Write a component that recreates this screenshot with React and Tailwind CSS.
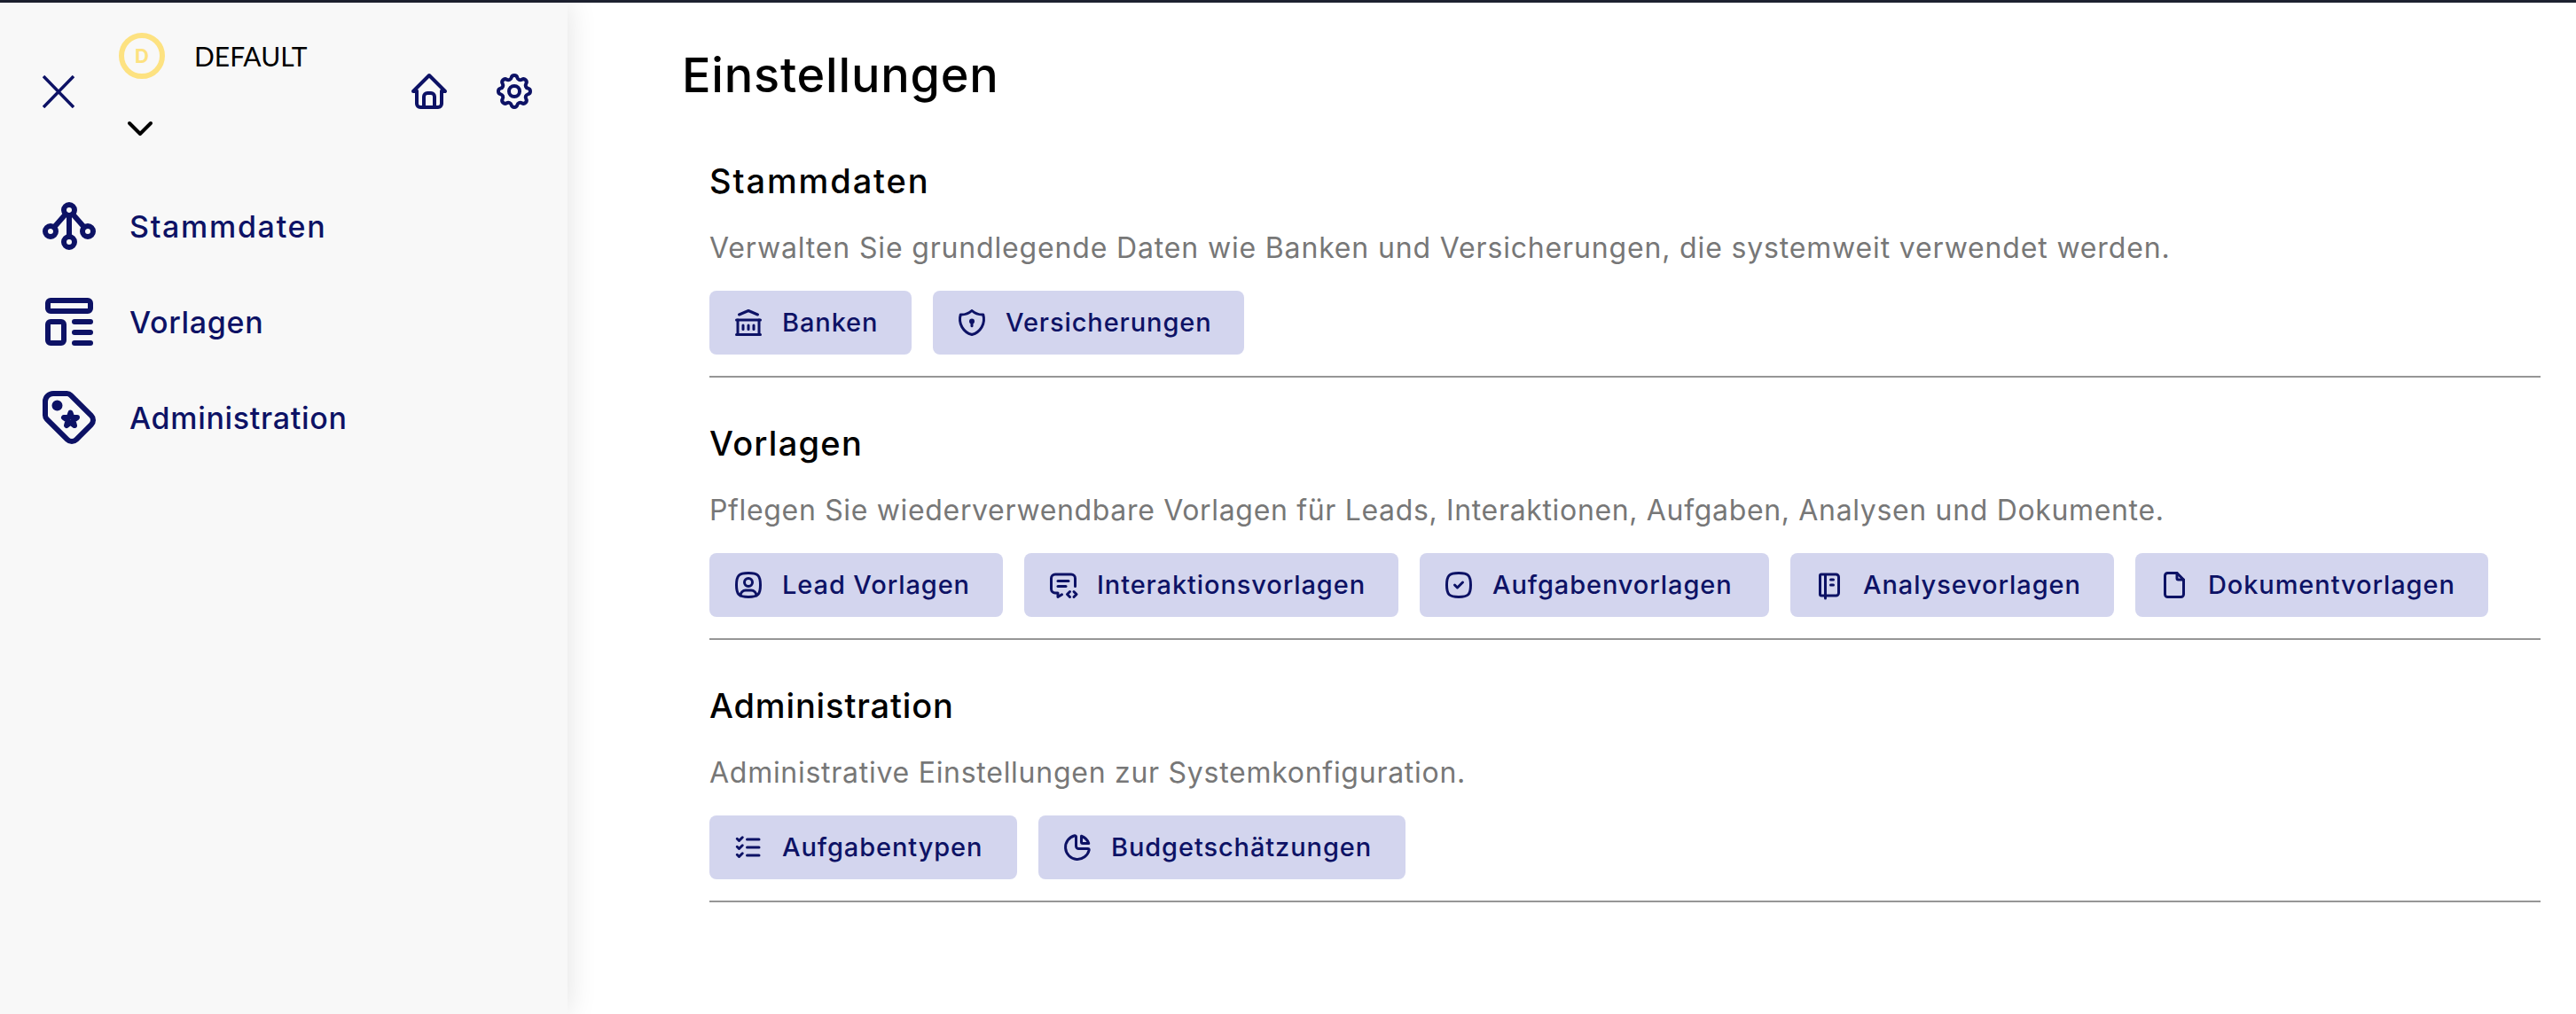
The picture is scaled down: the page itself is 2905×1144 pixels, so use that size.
import {
  TbBinaryTree2, TbTemplate, TbTagStarred, TbHome, TbSettings, TbChevronDown,
  TbBuildingBank, TbShieldLock, TbUserSquareRounded, TbMessageCode,
  TbSquareRoundedCheck, TbNotebook, TbFile, TbListCheck, TbChartPie,
} from 'react-icons/tb';

const NAV = [
  { label: 'Stammdaten', icon: TbBinaryTree2, track: 'tracking-[1.7px]' },
  { label: 'Vorlagen', icon: TbTemplate, track: 'tracking-[0.7px]' },
  { label: 'Administration', icon: TbTagStarred, track: 'tracking-[0.7px]' },
];

const SECTIONS = [
  {
    title: 'Stammdaten',
    track: 'tracking-[1.9px]',
    descTrack: 'tracking-[0.84px]',
    desc: 'Verwalten Sie grundlegende Daten wie Banken und Versicherungen, die systemweit verwendet werden.',
    items: [
      { label: 'Banken', icon: TbBuildingBank, w: 'w-[228px]' },
      { label: 'Versicherungen', icon: TbShieldLock, w: 'w-[351px]' },
    ],
  },
  {
    title: 'Vorlagen',
    track: 'tracking-[1.25px]',
    descTrack: 'tracking-[0.66px]',
    desc: 'Pflegen Sie wiederverwendbare Vorlagen für Leads, Interaktionen, Aufgaben, Analysen und Dokumente.',
    items: [
      { label: 'Lead Vorlagen', icon: TbUserSquareRounded, w: 'w-[331px]' },
      { label: 'Interaktionsvorlagen', icon: TbMessageCode, w: 'w-[422px]' },
      { label: 'Aufgabenvorlagen', icon: TbSquareRoundedCheck, w: 'w-[394px]' },
      { label: 'Analysevorlagen', icon: TbNotebook, w: 'w-[365px]' },
      { label: 'Dokumentvorlagen', icon: TbFile, w: 'w-[398px]' },
    ],
  },
  {
    title: 'Administration',
    track: 'tracking-[0.86px]',
    descTrack: 'tracking-[0.73px]',
    desc: 'Administrative Einstellungen zur Systemkonfiguration.',
    items: [
      { label: 'Aufgabentypen', icon: TbListCheck, w: 'w-[347px]' },
      { label: 'Budgetschätzungen', icon: TbChartPie, w: 'w-[414px]' },
    ],
  },
];

function Sidebar() {
  return (
    <aside className="w-[640px] shrink-0 bg-[#f8f8f8] shadow-[0_0_32px_rgba(0,0,0,0.12)] relative pt-[34px]">
      <div className="flex items-center">
        <svg className="ml-[48px] w-[36px] h-[37px] text-[#0d1265]" viewBox="0 0 36 37" fill="none" stroke="currentColor" strokeWidth="3.5">
          <path d="M1 1l34 35M35 1L1 36" />
        </svg>
        <div className="ml-[50px] flex flex-col">
          <div className="flex items-center">
            <div className="w-[52px] h-[52px] rounded-full border-[6px] border-[#fde281] flex items-center justify-center text-[22px] font-bold text-[#fde281]">D</div>
            <span className="ml-[33px] text-[30px] leading-[52px] text-black font-normal font-['Lato']">DEFAULT</span>
          </div>
          <TbChevronDown className="mt-[32px] text-[48px] text-black" />
        </div>
        <div className="ml-auto flex items-center gap-[48px] mr-[36px] text-[#0d1265]">
          <TbHome className="text-[48px]" />
          <TbSettings className="text-[48px]" />
        </div>
      </div>
      <nav className="mt-[50px] flex flex-col gap-[36px]">
        {NAV.map(({ label, icon: Icon, track }) => (
          <div key={label} className="flex items-center h-[72px] pl-[42px] text-[#0d1265]">
            <Icon className="text-[72px] shrink-0" />
            <span className={`${track} ml-[32px] text-[34px] font-medium`}>{label}</span>
          </div>
        ))}
      </nav>
    </aside>
  );
}

export default function App() {
  return (
    <div className="min-h-screen h-[1144px] overflow-hidden flex flex-col bg-white font-['Inter','Noto_Sans',sans-serif]">
      <div className="h-[3px] shrink-0 bg-[#1d2130]" />
      <div className="flex flex-1 min-h-0">
        <Sidebar />
        <main className="flex-1 pr-[40px]">
          <h1 className="pl-[129px] h-[127px] pt-[50px] leading-[64px] text-[54px] tracking-[0.8px] font-medium text-black">Einstellungen</h1>
          <div className="pl-[160px]">
            {SECTIONS.map((s) => (
              <section key={s.title} className="pt-[52px] pb-[24px] border-b-2 border-[#969696]">
                <h2 className={`${s.track} h-[44px] leading-[44px] text-[38px] font-medium text-black`}>{s.title}</h2>
                <p className={`${s.descTrack} pt-[2px] mt-[30px] h-[44px] leading-[44px] text-[32px] text-[#777777]`}>{s.desc}</p>
                <div className="mt-[28px] flex gap-[24px]">
                  {s.items.map(({ label, icon: Icon, w }) => (
                    <button key={label} className={`${w} h-[72px] rounded-[8px] bg-[#d3d5ee] flex items-center pl-[26px] text-[#0d1265]`}>
                      <Icon className="text-[36px] shrink-0" />
                      <span className="ml-[20px] text-[29px] tracking-[0.9px] font-medium whitespace-nowrap">{label}</span>
                    </button>
                  ))}
                </div>
              </section>
            ))}
          </div>
        </main>
      </div>
    </div>
  );
}
